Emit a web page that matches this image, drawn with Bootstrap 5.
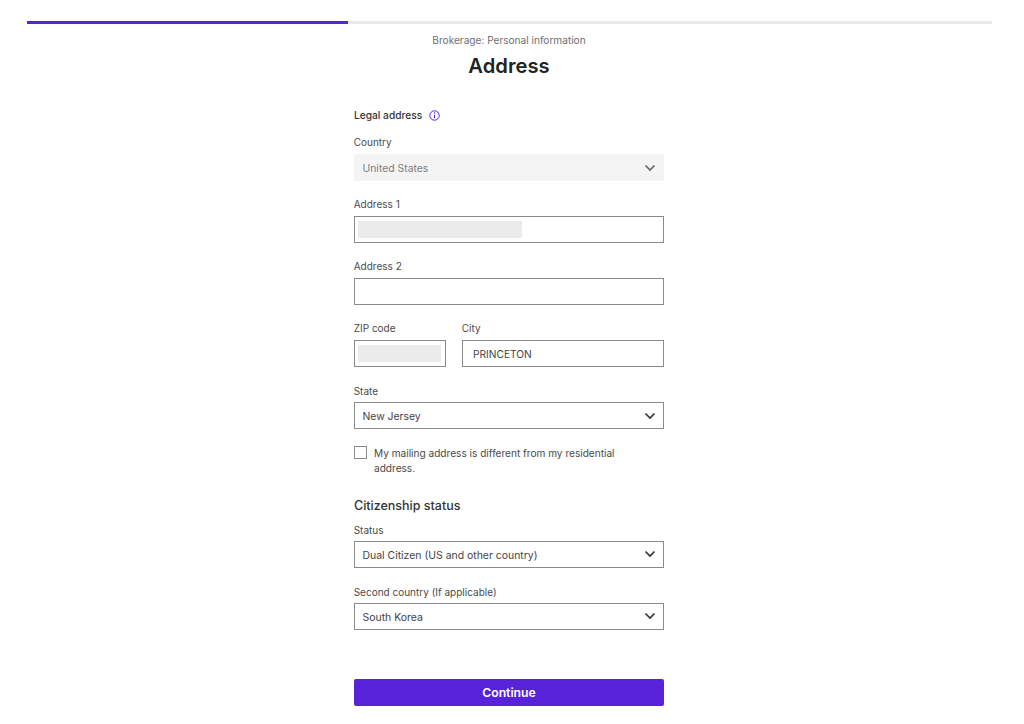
<!DOCTYPE html>
<html lang="en">
<head>
<meta charset="utf-8">
<title>Address</title>
<link href="https://cdn.jsdelivr.net/npm/bootstrap@5.3.0/dist/css/bootstrap.min.css" rel="stylesheet">
<style>
body{font-family:Inter,"Liberation Sans",sans-serif;font-size:10px;color:#4a4a4a;background:#fff;height:724px;overflow:hidden}
.track{height:3px;background:#e9e9eb;margin:21px 32px 0 27px}
.track-fill{height:3px;width:321px;background:#5822d8}
.crumb{font-size:10.1px;line-height:14px;color:#6f6f6f;margin-top:9px}
.title{font-size:20.2px;font-weight:600;line-height:28px;color:#222;margin:5px 0 0}
.formcol{width:310px;margin-left:354px}
.legal{font-weight:500;color:#333;font-size:10.2px;line-height:14px;margin-top:28px;gap:7px}
.lbl{display:block;font-size:10px;line-height:14px;color:#4a4a4a;margin:0 0 5px;margin-left:-.3px}
.lbl-tight{margin-bottom:4px}
.ctl,.ctl:focus{height:27px;border:1px solid #8a8a8a;border-radius:0;box-shadow:none;font-size:10.4px;line-height:14px;color:#444;padding:0 7.5px;background-color:#fff}
.sel,.sel:focus{background-size:12px 12px;background-position:right 7px center;padding:2px 24px 0 7.5px;background-image:url("data:image/svg+xml,%3csvg xmlns='http://www.w3.org/2000/svg' viewBox='0 0 12 12'%3e%3cpath fill='none' stroke='%23333' stroke-width='1.7' d='M1.5 3.5 6 8l4.5-4.5'/%3e%3c/svg%3e")}
.sel-low,.sel-low:focus{padding-top:4px;font-size:10.45px}
.sel:disabled{background-color:#f4f4f4;border-color:#f4f4f4;color:#7c7c7c;opacity:1;background-image:url("data:image/svg+xml,%3csvg xmlns='http://www.w3.org/2000/svg' viewBox='0 0 12 12'%3e%3cpath fill='none' stroke='%23666' stroke-width='1.7' d='M1.5 3.5 6 8l4.5-4.5'/%3e%3c/svg%3e")}
.txt{padding-left:10px;font-size:10.2px}
.box{height:27px;border:1px solid #8a8a8a;padding:4px 4px 4px 3px;background:#fff}
.mask{height:17px;background:#ebebeb}
.form-check-input.ck{width:13px;height:13px;border:1px solid #8a8a8a;border-radius:0;margin:0;flex:none;box-shadow:none}
.cktext{font-size:10.1px;line-height:14.5px;color:#4a4a4a;margin:0;padding-right:30px}
.sub{font-size:12.5px;font-weight:500;line-height:18px;color:#333;margin:0}
.cta,.cta:hover{height:27px;background:#5822d8;border:0;border-radius:2px;color:#fff;font-size:12.2px;font-weight:600;padding:2px 0 0;width:100%}
.mcountry{margin-top:13px}.m2{margin-top:16px}.m2b{margin-top:17px}
.mck{margin-top:17px;gap:7px}.msub{margin-top:21.5px}.ms{margin-top:8px}.mcta{margin-top:49px}
.zip{width:92px;flex:none}
.gapx{gap:16px}
</style>
</head>
<body>
<div class="track"><div class="track-fill"></div></div>
<form class="formcol">
  <div class="text-center">
    <div class="crumb">Brokerage: Personal information</div>
    <h1 class="title">Address</h1>
  </div>
  <div class="legal d-flex align-items-center">Legal address
    <svg width="11" height="11" viewBox="0 0 11 11" aria-hidden="true"><circle cx="5.5" cy="5.5" r="4.7" fill="none" stroke="#5822d8" stroke-width="1"/><path d="M5.5 4.7v3.5" stroke="#5822d8" stroke-width="1.1"/><circle cx="5.5" cy="3" r=".7" fill="#5822d8"/></svg>
  </div>
  <div class="mcountry">
    <label class="lbl">Country</label>
    <select class="form-select ctl sel" disabled><option>United States</option></select>
  </div>
  <div class="m2">
    <label class="lbl">Address 1</label>
    <div class="box"><div class="mask" style="width:164px"></div></div>
  </div>
  <div class="m2">
    <label class="lbl">Address 2</label>
    <input class="form-control ctl txt" type="text">
  </div>
  <div class="m2 d-flex gapx">
    <div class="zip">
      <label class="lbl">ZIP code</label>
      <div class="box"><div class="mask"></div></div>
    </div>
    <div class="flex-grow-1">
      <label class="lbl">City</label>
      <input class="form-control ctl txt" type="text" value="PRINCETON">
    </div>
  </div>
  <div class="m2b">
    <label class="lbl lbl-tight">State</label>
    <select class="form-select ctl sel"><option>New Jersey</option></select>
  </div>
  <div class="mck d-flex">
    <input class="form-check-input ck" type="checkbox" id="mail">
    <label class="cktext" for="mail">My mailing address is different from my residential address.</label>
  </div>
  <h2 class="sub msub">Citizenship status</h2>
  <div class="ms">
    <label class="lbl lbl-tight">Status</label>
    <select class="form-select ctl sel sel-low"><option>Dual Citizen (US and other country)</option></select>
  </div>
  <div class="m2b">
    <label class="lbl lbl-tight">Second country (If applicable)</label>
    <select class="form-select ctl sel sel-low"><option>South Korea</option></select>
  </div>
  <div class="mcta"><button type="button" class="btn cta">Continue</button></div>
</form>
</body>
</html>
